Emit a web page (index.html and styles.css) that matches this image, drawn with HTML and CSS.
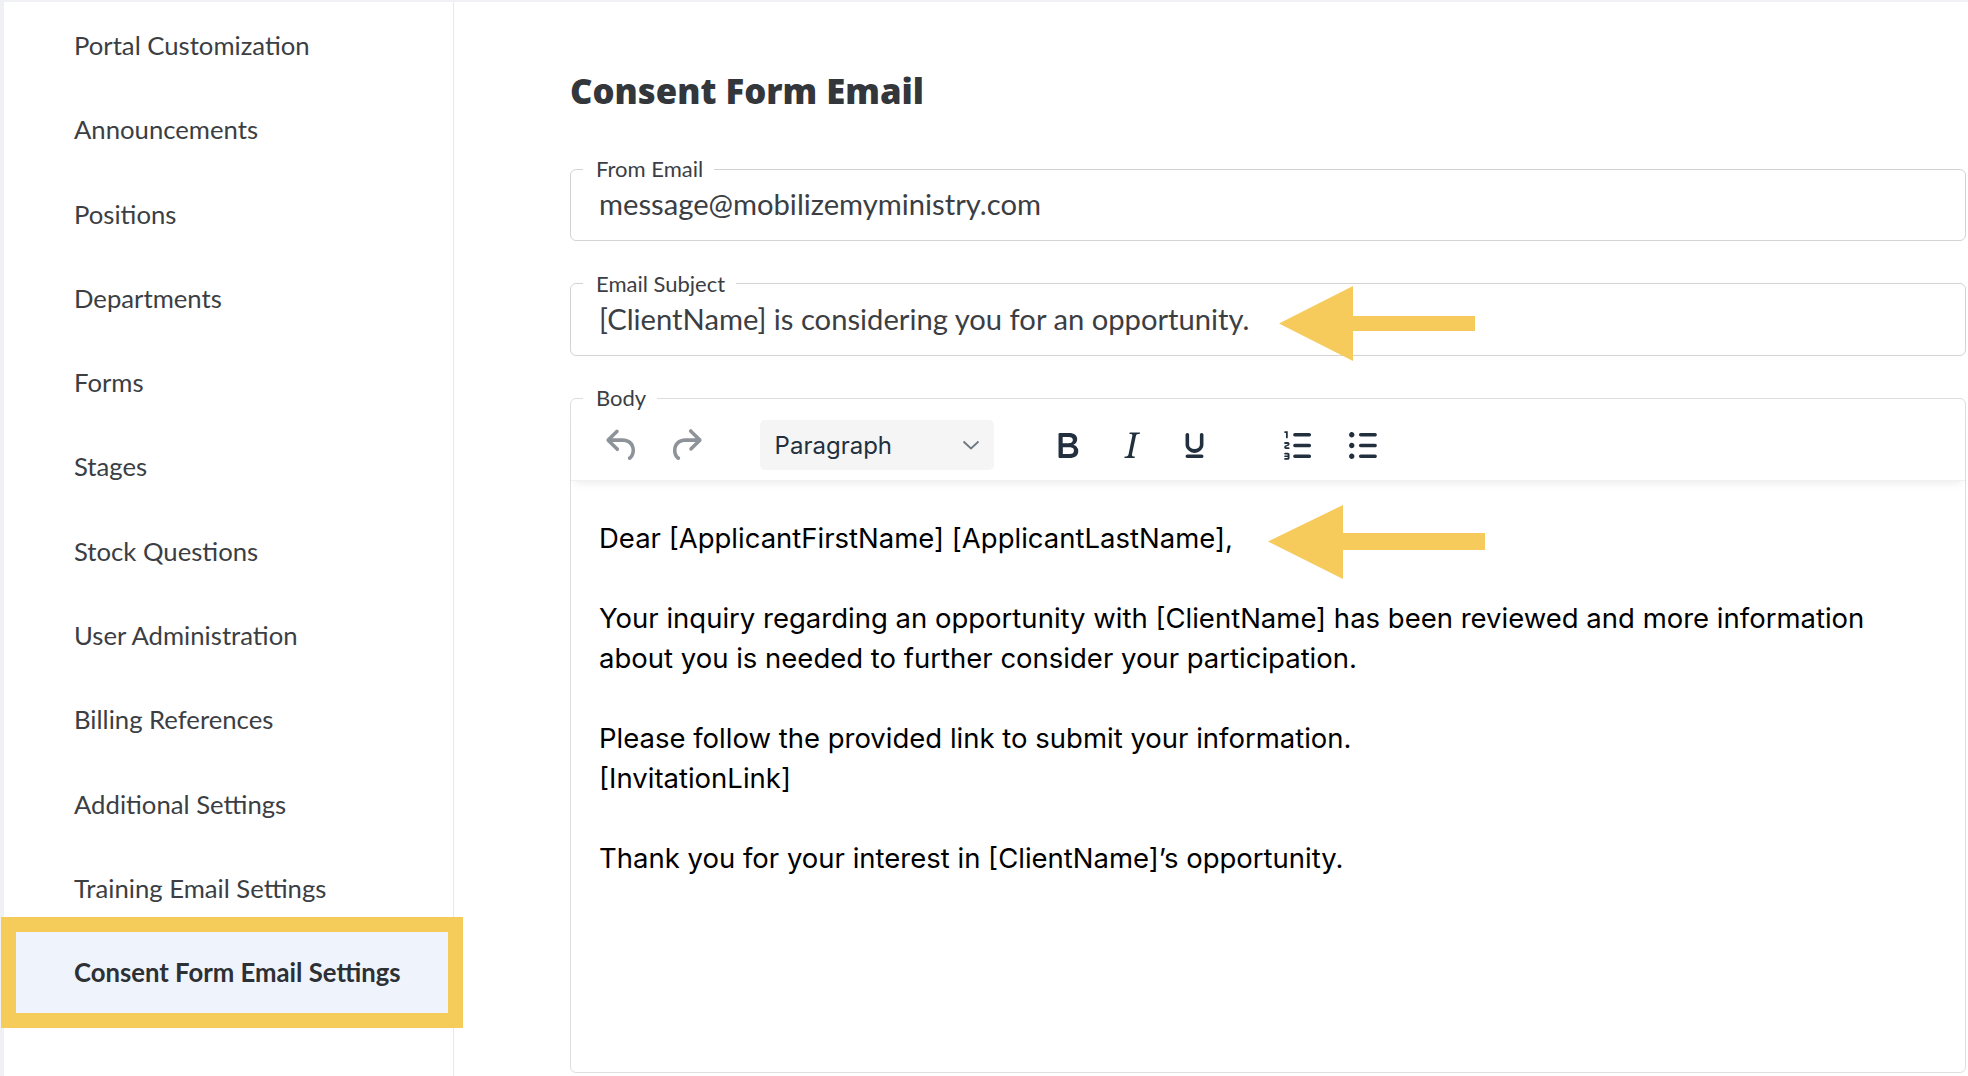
FILE: index.html
```html
<!DOCTYPE html>
<html lang="en">
<head>
<meta charset="utf-8">
<title>Consent Form Email</title>
<link rel="stylesheet" href="styles.css">
</head>
<body>
<div class="app">
  <nav class="sidebar">
    <a class="nav-item" href="#">Portal Customization</a>
    <a class="nav-item" href="#">Announcements</a>
    <a class="nav-item" href="#">Positions</a>
    <a class="nav-item" href="#">Departments</a>
    <a class="nav-item" href="#">Forms</a>
    <a class="nav-item" href="#">Stages</a>
    <a class="nav-item" href="#">Stock Questions</a>
    <a class="nav-item" href="#">User Administration</a>
    <a class="nav-item" href="#">Billing References</a>
    <a class="nav-item" href="#">Additional Settings</a>
    <a class="nav-item" href="#">Training Email Settings</a>
    <a class="nav-item active" href="#">Consent Form Email Settings</a>
  </nav>
  <main class="main">
    <h1 class="title">Consent Form Email</h1>

    <fieldset class="field">
      <legend class="field-label">From Email</legend>
      <div class="field-value">message@mobilizemyministry.com</div>
    </fieldset>

    <fieldset class="field field-gap">
      <legend class="field-label">Email Subject</legend>
      <div class="field-value">[ClientName] is considering you for an opportunity.</div>
    </fieldset>

    <fieldset class="field field-gap editor">
      <legend class="field-label">Body</legend>
      <div class="toolbar">
        <div class="tb-group">
          <button class="tb-btn disabled" type="button" aria-label="Undo">
            <svg viewBox="0 0 24 24"><path d="M6.4 8H12c3.7 0 6.2 2 6.8 5.1.6 2.7-.4 5.6-2.3 6.8a1 1 0 0 1-1-1.8c1.1-.6 1.8-2.7 1.4-4.6-.5-2.1-2.1-3.5-4.9-3.5H6.4l3.3 3.3a1 1 0 1 1-1.4 1.4l-5-5a1 1 0 0 1 0-1.4l5-5a1 1 0 0 1 1.4 1.4L6.4 8Z"/></svg>
          </button>
          <button class="tb-btn disabled" type="button" aria-label="Redo">
            <svg viewBox="0 0 24 24"><path d="M17.6 10H12c-2.8 0-4.4 1.4-4.9 3.5-.4 2 .3 4 1.4 4.6a1 1 0 1 1-1 1.8c-2-1.2-2.9-4.1-2.3-6.8.6-3 3.1-5.1 6.8-5.1h5.6l-3.3-3.3a1 1 0 1 1 1.4-1.4l5 5a1 1 0 0 1 0 1.4l-5 5a1 1 0 0 1-1.4-1.4l3.3-3.3Z"/></svg>
          </button>
        </div>
        <div class="tb-group">
          <button class="tb-select" type="button">
            <span>Paragraph</span>
            <svg class="chev" viewBox="0 0 18 10"><path d="M1.5 1.5 9 8.5l7.5-7"/></svg>
          </button>
        </div>
        <div class="tb-group">
          <button class="tb-btn" type="button" aria-label="Bold">
            <svg viewBox="0 0 24 24"><path d="M7.8 19c-.3 0-.5 0-.6-.2l-.2-.5V5.7c0-.2 0-.4.2-.5l.6-.2h5c1.5 0 2.7.3 3.5 1 .7.6 1.1 1.4 1.1 2.5a3 3 0 0 1-.6 1.9c-.4.6-1 1-1.6 1.2.4.1.9.3 1.3.6s.8.7 1 1.2c.4.4.5 1 .5 1.6 0 1.3-.4 2.3-1.3 3-.8.7-2.1 1-3.8 1H7.8Zm5-8.3c.6 0 1.2-.1 1.6-.5.4-.3.6-.7.6-1.3 0-1.1-.8-1.7-2.3-1.7H9.3v3.5h3.4Zm.5 6c.7 0 1.3-.1 1.7-.4.4-.4.6-.9.6-1.5s-.2-1-.7-1.4c-.4-.3-1-.4-2-.4H9.4v3.8h4Z"/></svg>
          </button>
          <button class="tb-btn" type="button" aria-label="Italic">
            <svg viewBox="0 0 24 24"><path d="m16.7 4.7-.1.9h-.3c-.6 0-1 0-1.4.3-.3.3-.4.6-.5 1.1l-2.1 9.8v.6c0 .5.4.8 1.4.8h.2l-.2.8H8l.2-.8h.2c1.1 0 1.8-.5 2-1.5l2-9.8.1-.5c0-.6-.4-.8-1.4-.8h-.3l.2-.9h5.8Z"/></svg>
          </button>
          <button class="tb-btn" type="button" aria-label="Underline">
            <svg viewBox="0 0 24 24"><path d="M16 5c.6 0 1 .4 1 1v5.5a4 4 0 0 1-.4 1.8l-1 1.4a5.3 5.3 0 0 1-5.5 1 5 5 0 0 1-1.6-1c-.5-.4-.8-.9-1.1-1.4a4 4 0 0 1-.4-1.8V6c0-.6.4-1 1-1s1 .4 1 1v5.5c0 .3 0 .6.2 1l.6.7a3.3 3.3 0 0 0 2.2.8 3.4 3.4 0 0 0 2.2-.8c.3-.2.4-.5.6-.8l.2-.9V6c0-.6.4-1 1-1ZM8 17h8c.6 0 1 .4 1 1s-.4 1-1 1H8a1 1 0 0 1 0-2Z"/></svg>
          </button>
        </div>
        <div class="tb-group">
          <button class="tb-btn" type="button" aria-label="Numbered list">
            <svg viewBox="0 0 24 24"><path d="M10 17h8c.6 0 1 .4 1 1s-.4 1-1 1h-8a1 1 0 0 1 0-2Zm0-6h8c.6 0 1 .4 1 1s-.4 1-1 1h-8a1 1 0 0 1 0-2Zm0-6h8c.6 0 1 .4 1 1s-.4 1-1 1h-8a1 1 0 1 1 0-2ZM6 4v3.5c0 .3-.2.5-.5.5a.5.5 0 0 1-.5-.5V5h-.5a.5.5 0 0 1 0-1H6Zm-1 8.8.2.2h1.3c.3 0 .5.2.5.5s-.2.5-.5.5H4.9a1 1 0 0 1-.9-1V13c0-.4.3-.8.6-1l1.2-.4.2-.3a.2.2 0 0 0-.2-.2H4.5a.5.5 0 0 1-.5-.5c0-.3.2-.5.5-.5h1.6c.5 0 .9.4.9 1v.1c0 .4-.3.8-.6 1l-1.2.4-.2.3ZM7 17v2c0 .6-.4 1-1 1H4.5a.5.5 0 0 1 0-1h1.2c.2 0 .3-.1.3-.3 0-.2-.1-.3-.3-.3H4.4a.4.4 0 1 1 0-.8h1.3c.2 0 .3-.1.3-.3 0-.2-.1-.3-.3-.3H4.5a.5.5 0 1 1 0-1H6c.6 0 1 .4 1 1Z"/></svg>
          </button>
          <button class="tb-btn" type="button" aria-label="Bullet list">
            <svg viewBox="0 0 24 24"><path d="M11 5h8c.6 0 1 .4 1 1s-.4 1-1 1h-8a1 1 0 0 1 0-2Zm0 6h8c.6 0 1 .4 1 1s-.4 1-1 1h-8a1 1 0 0 1 0-2Zm0 6h8c.6 0 1 .4 1 1s-.4 1-1 1h-8a1 1 0 0 1 0-2ZM4.5 6c0-.4.1-.8.4-1 .3-.4.7-.5 1.1-.5.4 0 .8.1 1 .4.4.3.5.7.5 1.1 0 .4-.1.8-.4 1-.3.4-.7.5-1.1.5-.4 0-.8-.1-1-.4-.4-.3-.5-.7-.5-1.1Zm0 6c0-.4.1-.8.4-1 .3-.4.7-.5 1.1-.5.4 0 .8.1 1 .4.4.3.5.7.5 1.1 0 .4-.1.8-.4 1-.3.4-.7.5-1.1.5-.4 0-.8-.1-1-.4-.4-.3-.5-.7-.5-1.1Zm0 6c0-.4.1-.8.4-1 .3-.4.7-.5 1.1-.5.4 0 .8.1 1 .4.4.3.5.7.5 1.1 0 .4-.1.8-.4 1-.3.4-.7.5-1.1.5-.4 0-.8-.1-1-.4-.4-.3-.5-.7-.5-1.1Z"/></svg>
          </button>
        </div>
      </div>
      <div class="editor-content">
        <p>Dear [ApplicantFirstName] [ApplicantLastName],</p>
        <p>Your inquiry regarding an opportunity with [ClientName] has been reviewed and more information about you is needed to further consider your participation.</p>
        <p>Please follow the provided link to submit your information.<br>[InvitationLink]</p>
        <p>Thank you for your interest in [ClientName]’s opportunity.</p>
      </div>
    </fieldset>

    <svg class="callout callout-subject" viewBox="0 0 196 75" aria-hidden="true"><polygon points="0,37.5 74,0 74,30 196,30 196,45 74,45 74,75"/></svg>
    <svg class="callout callout-body" viewBox="0 0 217 74" aria-hidden="true"><polygon points="0,36.5 75,0 75,28 217,28 217,45 75,45 75,74"/></svg>
  </main>
</div>
</body>
</html>
```

FILE: styles.css
```css
html, body {
  margin: 0;
  height: 100%;
  overflow: hidden;
}

body {
  box-sizing: border-box;
  padding: 2px 0 0 4px;
  background: #eff1f4;
  font-family: Lato, "Liberation Sans", sans-serif;
  color: #3b3e43;
}

.app {
  display: flex;
  height: 1074px;
  background: #ffffff;
}

/* Sidebar */
.sidebar {
  flex: none;
  width: 450px;
  box-sizing: border-box;
  padding-top: 1px;
  border-right: 1px solid #e6e8eb;
  position: relative;
  z-index: 2;
}

.nav-item {
  display: block;
  height: 84.3px;
  line-height: 84.3px;
  padding-left: 70px;
  font-size: 25.7px;
  color: #3b3e43;
  text-decoration: none;
  white-space: nowrap;
}

.nav-item.active {
  position: relative;
  background: #eff4fc;
  font-weight: 700;
  color: #2d3035;
}

.nav-item.active::after {
  content: "";
  position: absolute;
  left: -3px;
  right: -10px;
  top: -13px;
  bottom: -13px;
  border: 15px solid #f5cb5a;
}

/* Main */
.main {
  flex: 1;
  min-width: 0;
  position: relative;
  padding: 0 2px 0 116px;
}

.title {
  margin: 66px 0 0;
  font-family: "Open Sans", sans-serif;
  font-weight: 800;
  font-size: 34.7px;
  line-height: 46px;
  color: #33363b;
}

.field {
  margin: 43px 0 0;
  padding: 0;
  min-width: 0;
  border: 1px solid #d3d3d3;
  border-radius: 6px;
}

.field-gap {
  margin-top: 30.5px;
}

.field-label {
  margin-left: 12px;
  padding: 0 11px 0 13px;
  font-size: 22px;
  line-height: 24px;
  color: #3b3e43;
}

.field-value {
  box-sizing: border-box;
  height: 59px;
  padding: 6px 28px 0;
  font-size: 29.2px;
  line-height: 34px;
  color: #3b3e43;
  white-space: nowrap;
}

/* Editor */
.editor {
  border-color: #dedede;
}

.toolbar {
  position: relative;
  z-index: 1;
  display: flex;
  align-items: center;
  gap: 44px;
  box-sizing: border-box;
  height: 70px;
  padding: 0 0 0 21px;
  background: #fff;
  box-shadow: 0 1px 0 #f1f1f1, 0 7px 8px -4px rgba(0, 0, 0, 0.08);
}

.tb-group {
  display: flex;
  align-items: center;
  gap: 3.6px;
}

.tb-btn {
  display: flex;
  align-items: center;
  justify-content: center;
  width: 60px;
  height: 60px;
  padding: 0;
  border: 0;
  background: transparent;
}

.tb-btn svg {
  width: 43px;
  height: 43px;
  fill: #222f3e;
}

.tb-btn.disabled svg {
  fill: #8e9399;
}

.tb-select {
  display: flex;
  align-items: center;
  justify-content: space-between;
  box-sizing: border-box;
  width: 234px;
  height: 50px;
  padding: 0 14px 0 15px;
  border: 0;
  border-radius: 5px;
  background: #f5f5f5;
  font-family: Inter, "Noto Sans", sans-serif;
  font-size: 24px;
  color: #222f3e;
}

.chev {
  width: 18px;
  height: 10px;
  fill: none;
  stroke: #6f7780;
  stroke-width: 1.8;
}

.editor-content {
  box-sizing: border-box;
  height: 592px;
  padding: 38px 28px 0;
  font-family: Inter, "Noto Sans", sans-serif;
  font-size: 27.5px;
  line-height: 40.6px;
  color: #000;
}

.editor-content p {
  margin: 0 0 39px;
}

/* Annotation callouts */
.callout {
  position: absolute;
  fill: #f6cb5b;
}

.callout-subject {
  left: 825px;
  top: 284px;
  width: 196px;
  height: 75px;
}

.callout-body {
  left: 814px;
  top: 503px;
  width: 217px;
  height: 74px;
}
```
